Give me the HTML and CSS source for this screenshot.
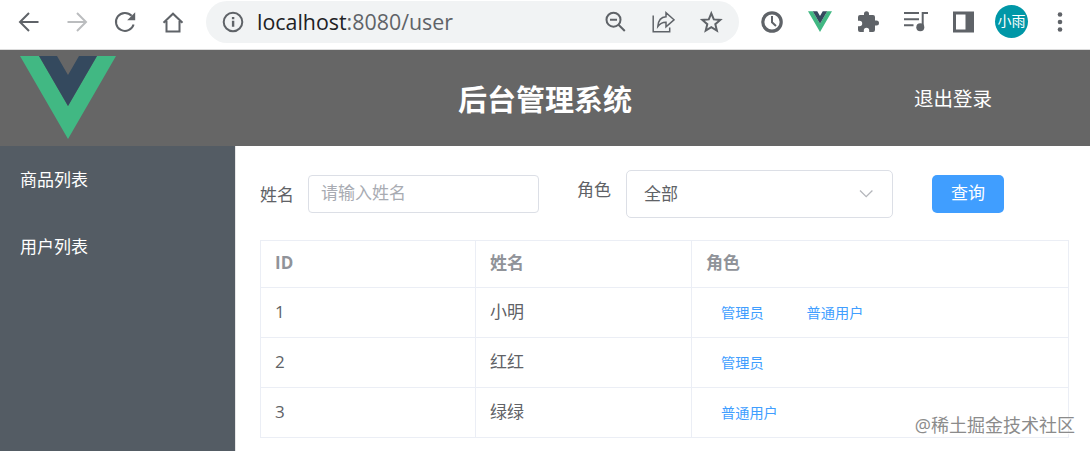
FILE: index.html
```html
<!DOCTYPE html>
<html lang="zh-CN">
	<head>
		<meta charset="UTF-8" />
		<meta name="viewport" content="width=device-width, initial-scale=1.0" />
		<title>后台管理系统</title>
		<link rel="stylesheet" href="styles.css">
	</head>
	<body>
		<div class="toolbar">
			<span class="tool"><svg width="24" height="24" viewBox="0 0 24 24"><path class="line" d="M21.5 12H3M12 3l-9 9 9 9" /></svg></span>
			<span class="tool off"><svg width="24" height="24" viewBox="0 0 24 24"><path class="line" d="M2.5 12H21M12 3l9 9-9 9" /></svg></span>
			<span class="tool"><svg width="24" height="24" viewBox="0 0 24 24"><path class="line" d="M20.6 14.5a9 9 0 1 1-2-8.7" /><path d="M22.2 2.3v8h-8z" /></svg></span>
			<span class="tool"><svg width="24" height="24" viewBox="0 0 24 24"><path class="line" d="M2.5 12.8L12 3.7l9.5 9.1M5.5 11v10.400h13V11" /></svg></span>

			<div class="address">
				<span class="info"><svg width="24" height="24" viewBox="0 0 24 24"><circle class="line" cx="12" cy="12" r="9.3" /><path d="M10.9 10.8h2.400v6h-2.400zM10.900 7h2.400v2.300h-2.400z" /></svg></span>
				<span class="url"><b>localhost</b>:8080/user</span>
				<span class="tool"><svg width="24" height="24" viewBox="0 0 24 24"><circle class="line" cx="10.5" cy="9.7" r="7" /><path class="line" d="M7 9.700h7M15.500 14.700l6.300 6.300" /></svg></span>
				<span class="tool"><svg width="24" height="24" viewBox="0 0 24 24"><path class="thin" d="M2.200 5.500v16.200h16.500v-4.200M6.800 16.500C7.300 10 10.500 7 15 6.800V2.700l8 7.100-8 7v-4.500C11.500 12.200 9 13.500 6.800 16.500z" /></svg></span>
				<span class="tool"><svg width="24" height="24" viewBox="0 0 24 24"><path class="line" d="M12.300 3.400l2.500 6 6.500.5-5 4.300 1.600 6.400-5.600-3.500-5.600 3.500 1.600-6.400-5-4.300 6.500-.5z" /></svg></span>
			</div>

			<span class="tool"><svg width="24" height="24" viewBox="0 0 24 24"><circle class="bold" cx="12" cy="12" r="9.2" /><path class="line" d="M12 6v6.300l4 3.600" /></svg></span>
			<span class="tool"><svg width="24" height="21" viewBox="0 0 96 83"><path fill="#41b883" d="M0 0h19l29 50L77 0h19L48 83z" /><path fill="#34495e" d="M19 0h18l11 19L59 0h18L48 50z" /></svg></span>
			<span class="tool"><svg width="24" height="24" viewBox="0 0 24 24"><path d="M20.500 10.500H19V7a2 2 0 0 0-2-2h-4V3.700a2.500 2.500 0 0 0-5 0V5H4a2 2 0 0 0-2 2v3.800h1.500a2.700 2.700 0 0 1 0 5.400H2V20a2 2 0 0 0 2 2h3.800v-1.500a2.700 2.700 0 0 1 5.400 0V22H17a2 2 0 0 0 2-2v-4.500h1.500a2.500 2.500 0 0 0 0-5z" /></svg></span>
			<span class="tool"><svg width="24" height="24" viewBox="0 0 24 24"><path class="line" d="M0 3h15M0 9.200h15M0 15.300h9.500M18.700 17.500V3H24" /><circle cx="16.300" cy="17.300" r="4" /></svg></span>
			<span class="tool"><svg width="24" height="24" viewBox="0 0 24 24"><path fill-rule="evenodd" d="M1 1.500h21v21H1zM4 4.500v15h9.500v-15z" /></svg></span>
			<span class="tool"><span class="avatar">小雨</span></span>
			<span class="tool"><svg width="24" height="24" viewBox="0 0 24 24"><circle cx="12" cy="4.500" r="2.300" /><circle cx="12" cy="12" r="2.300" /><circle cx="12" cy="19.500" r="2.300" /></svg></span>
		</div>

		<div class="header">
			<svg class="logo" width="96" height="83" viewBox="0 0 96 83"><path fill="#41b883" d="M0 0h19l29 50L77 0h19L48 83z" /><path fill="#34495e" d="M19 0h18l11 19L59 0h18L48 50z" /></svg>
			<h1>后台管理系统</h1>
			<a class="logout">退出登录</a>
		</div>

		<div class="container">
			<div class="menu">
				<a class="menu-item">商品列表</a>
				<a class="menu-item">用户列表</a>
			</div>

			<div class="main">
				<form class="search">
					<label class="name-label">姓名</label>
					<input class="name" type="text" placeholder="请输入姓名" />
					<label class="role-label">角色</label>
					<div class="select">
						<span>全部</span>
						<svg width="16" height="10" viewBox="0 0 16 10"><path d="M2 1.500l6.200 6.200 6.200-6.200" /></svg>
					</div>
					<button class="button" type="button">查询</button>
				</form>

				<table class="table">
					<tr>
						<th class="col-id">ID</th>
						<th class="col-name">姓名</th>
						<th>角色</th>
					</tr>
					<tr>
						<td>1</td>
						<td>小明</td>
						<td><a class="role">管理员</a><a class="role">普通用户</a></td>
					</tr>
					<tr>
						<td>2</td>
						<td>红红</td>
						<td><a class="role">管理员</a></td>
					</tr>
					<tr>
						<td>3</td>
						<td>绿绿</td>
						<td><a class="role">普通用户</a></td>
					</tr>
				</table>
			</div>
		</div>
		<div class="watermark">@稀土掘金技术社区</div>
	</body>
</html>
```

FILE: styles.css
```css
* {
	padding: 0;
	margin: 0;
	box-sizing: border-box;
}

body {
	height: 451px;
	overflow: hidden;
	font-family: 'Open Sans', 'Noto Sans CJK SC', sans-serif;
	font-size: 17px;
	color: #606266;
	background-color: #fff;
}

.toolbar {
	display: flex;
	height: 50px;
	padding: 0 5px 6px;
	border-bottom: 1px solid #dcdcdc;
}

.tool {
	display: flex;
	flex: none;
	justify-content: center;
	align-items: center;
	width: 48px;
	height: 43px;
}

.toolbar svg {
	fill: #5f6368;
}

.toolbar .line,
.toolbar .thin,
.toolbar .bold {
	fill: none;
	stroke: #5f6368;
	stroke-width: 2;
}

.toolbar .thin {
	stroke-width: 1.5;
}

.toolbar .bold {
	stroke-width: 3.2;
}

.toolbar .off .line {
	stroke: #bbbdbf;
}

.address {
	display: flex;
	align-items: center;
	width: 533px;
	height: 42px;
	margin: 1px 9px 0;
	padding: 0 4px 0 15px;
	border-radius: 21px;
	background-color: #f1f3f4;
}

.info {
	height: 24px;
	margin-right: 12px;
}

.url {
	flex: 1;
	font-size: 21.4px;
	line-height: 42px;
	color: #5f6368;
}

.url b {
	font-weight: normal;
	color: #202124;
}

.avatar {
	width: 33px;
	height: 33px;
	margin-right: 1px;
	border-radius: 50%;
	background-color: #0097a7;
	color: #fff;
	font-size: 14px;
	line-height: 32px;
	text-align: center;
}

.header {
	display: flex;
	align-items: center;
	height: 96px;
	padding: 0 98px 0 20px;
	color: #fff;
	background-color: #666;
}

.logo {
	margin: 0 342px 2px 0;
}

.header h1 {
	flex: 1;
	padding-top: 3px;
	font-size: 29px;
	line-height: 40px;
}

.logout {
	padding-bottom: 2px;
	font-size: 19.5px;
}

.container {
	display: flex;
	height: 305px;
}

.menu {
	flex: none;
	width: 236px;
	border-right: 1px solid #e6e6e6;
	background-color: #545c64;
}

.menu-item {
	display: block;
	height: 67px;
	padding-left: 20px;
	color: #fff;
	line-height: 67px;
}

.main {
	width: 833px;
	padding: 24px 0 0 24px;
}

.search {
	display: flex;
	align-items: center;
	height: 48px;
}

.name-label {
	width: 48px;
	padding-bottom: 2px;
}

.name {
	width: 231px;
	height: 38px;
	padding: 0 12px 3px;
	border: 1px solid #dcdfe6;
	border-radius: 4px;
	outline: none;
	font: inherit;
}

.name::placeholder {
	color: #a8abb2;
}

.role-label {
	width: 49px;
	margin-left: 38px;
	padding-bottom: 11px;
}

.select {
	display: flex;
	justify-content: space-between;
	align-items: center;
	width: 267px;
	height: 48px;
	padding: 0 18px 0 17px;
	border: 1px solid #dcdfe6;
	border-radius: 5px;
}

.select span {
	padding-bottom: 3px;
}

.select svg {
	fill: none;
	stroke: #b4b6bb;
	stroke-width: 1.3;
}

.button {
	width: 72px;
	height: 38px;
	margin-left: 39px;
	padding-bottom: 5px;
	border: none;
	border-radius: 5px;
	font: inherit;
	color: #fff;
	background-color: #409eff;
}

.table {
	width: 809px;
	margin-top: 22px;
	table-layout: fixed;
	border-collapse: collapse;
}

th,
td {
	height: 50px;
	padding: 0 0 1px 14px;
	border: 1px solid #ebeef5;
	line-height: 24px;
	text-align: left;
}

th {
	height: 47px;
	padding-bottom: 2px;
	color: #909399;
}

.col-id {
	width: 215px;
}

.col-name {
	width: 216px;
}

.role {
	margin: 0 29px 0 15px;
	font-size: 14.2px;
	color: #409eff;
}

.role + .role {
	margin-left: 14px;
}

.watermark {
	position: absolute;
	right: 15px;
	bottom: 13px;
	font-size: 18px;
	line-height: 26px;
	color: #8b8b8b;
	text-shadow: 1px 1px 1px #fff;
}
```
